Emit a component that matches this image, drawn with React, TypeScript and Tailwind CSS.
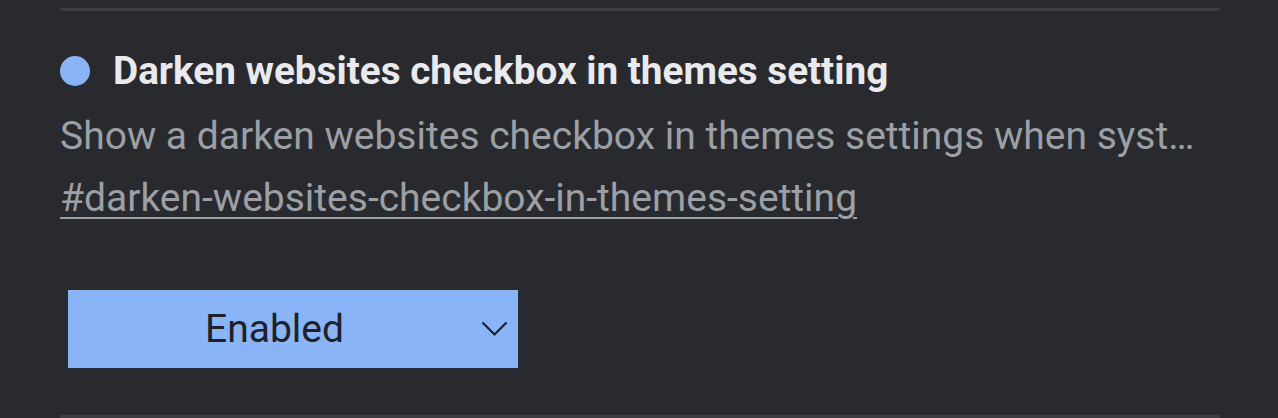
export default function App() {
  return (
    <div className="h-[418px] w-[1278px] overflow-hidden bg-[#292a2d] pt-[8px] font-['Roboto',sans-serif]">
      <div className="ml-[60px] w-[1160px] border-t-[3px] border-[#3c3d40] pt-[36px]">
        <div className="flex items-center gap-[23px]">
          <span className="h-[30px] w-[30px] shrink-0 rounded-full bg-[#8ab4f8]" />
          <h2 className="text-[38.7px] leading-[48px] font-bold text-[#e8eaed]">
            Darken websites checkbox in themes setting
          </h2>
        </div>
        <p className="mt-[17px] truncate pr-[14px] text-[39px] leading-[48px] text-[#9aa0a6]">
          Show a darken websites checkbox in themes settings when system theme is dark
        </p>
        <a className="mt-[14px] inline-block text-[39px] leading-[48px] text-[#9aa0a6] underline decoration-2 underline-offset-[6px]">
          #darken-websites-checkbox-in-themes-setting
        </a>
        <div className="mt-[68px] ml-[8px] flex h-[78px] w-[450px] items-center bg-[#8ab4f8] text-[#202124]">
          <span className="flex-1 text-center text-[39px]">Enabled</span>
          <svg width="27" height="16" viewBox="0 0 27 16" className="mr-[10px]">
            <path d="M1.5 1.5 L13.5 13.5 L25.5 1.5" fill="none" stroke="#202124" strokeWidth="2.2" />
          </svg>
        </div>
        <div className="mt-[47px] border-t-[3px] border-[#3c3d40]" />
      </div>
    </div>
  );
}
